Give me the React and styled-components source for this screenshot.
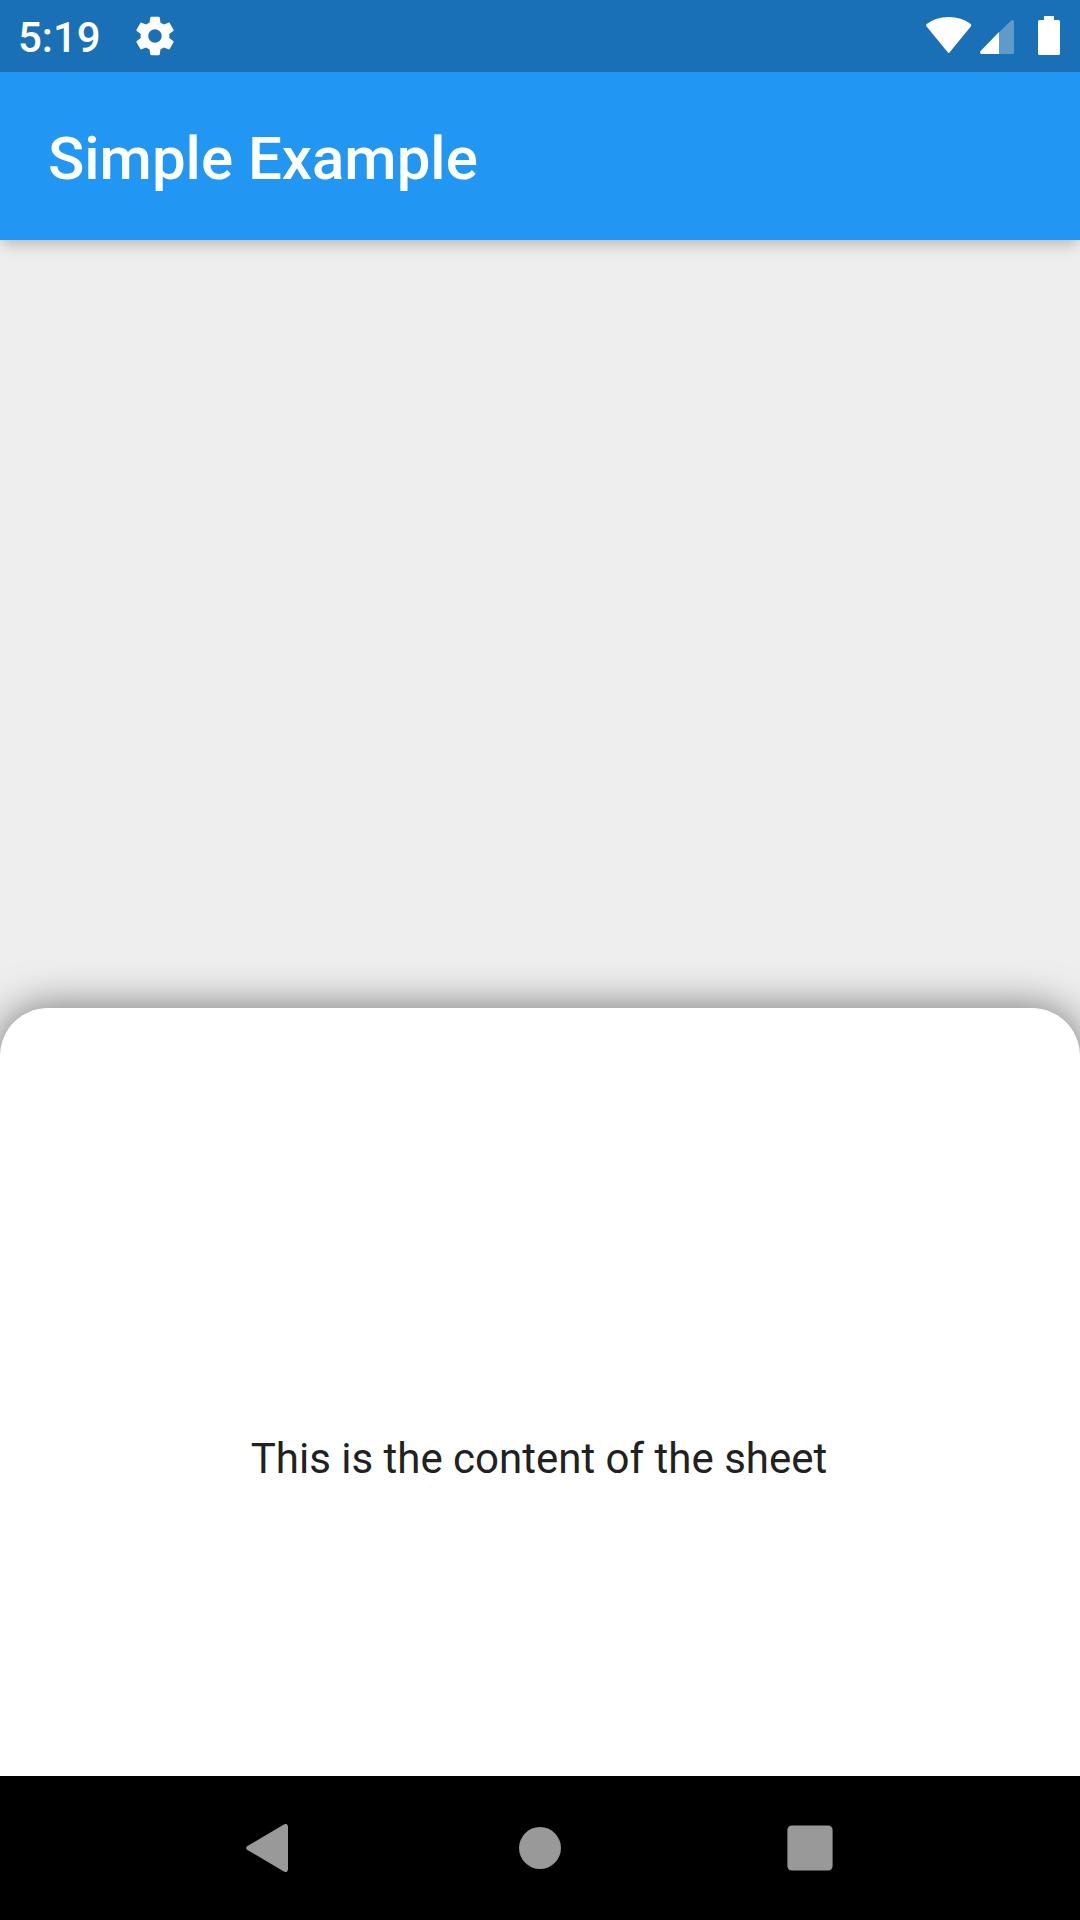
import React from 'react';
import styled, { createGlobalStyle } from 'styled-components';

const GlobalStyle = createGlobalStyle`
  * { box-sizing: border-box; }
  body { margin: 0; background: #000; }
`;

const Screen = styled.div`
  display: grid;
  grid-template-rows: 72px 168px 1536px 144px;
  width: 1080px;
  height: 1920px;
  overflow: hidden;
  font-family: Roboto, "Liberation Sans", sans-serif;
`;

const StatusBar = styled.header`
  z-index: 2;
  display: flex;
  justify-content: space-between;
  background: #1970b6;
  color: #fff;
`;

const StatusGroup = styled.div`
  display: flex;
  align-items: flex-start;
  gap: ${({ $gap = 0 }) => $gap}px;
  padding: ${({ $padding }) => $padding};
`;

const Clock = styled.span`
  width: 83px;
  font-size: 42px;
  font-weight: 500;
  line-height: 42px;
  padding-top: 2px;
`;

const Icon = styled.svg`
  display: block;
  flex: none;
  width: ${({ $w }) => $w}px;
  height: ${({ $h }) => $h}px;
  margin-top: ${({ $top = 0 }) => $top}px;
  margin-left: ${({ $left = 0 }) => $left}px;
  fill: currentColor;
`;

const AppBar = styled.div`
  z-index: 1;
  display: flex;
  align-items: center;
  padding: 6px 48px 0;
  background: #2196f3;
  box-shadow: 0 6px 12px -3px rgba(0, 0, 0, 0.16), 0 8px 15px 0 rgba(0, 0, 0, 0.05),
    0 3px 24px 0 rgba(0, 0, 0, 0.04);
`;

const Title = styled.h1`
  margin: 0;
  color: #fff;
  font-size: 60px;
  font-weight: 500;
  line-height: 70px;
`;

const Body = styled.main`
  padding-top: 768px;
  background: #eee;
  overflow: hidden;
`;

const Sheet = styled.section`
  display: flex;
  align-items: center;
  justify-content: center;
  height: 900px;
  border-radius: 48px 48px 0 0;
  background: #fff;
  box-shadow: 0 0 42px rgba(0, 0, 0, 0.54);
`;

const SheetText = styled.p`
  margin: 0 2px 0 0;
  color: #212121;
  font-size: 42px;
  line-height: 49px;
`;

const NavBar = styled.nav`
  z-index: 1;
  display: grid;
  grid-template-columns: repeat(3, 270px);
  justify-content: center;
  background: #000;
`;

const NavButton = styled.button`
  display: flex;
  align-items: center;
  justify-content: center;
  border: 0;
  padding: 0;
  background: none;
  color: #999;
`;

export default function App() {
  return (
    <Screen>
      <GlobalStyle />
      <StatusBar>
        <StatusGroup $gap={31} $padding="15px 0 0 18px">
          <Clock>5:19</Clock>
          <Icon viewBox="0 0 24 24" $w={46} $h={46} $top={-2}>
            <path d="M19.43 12.98c.04-.32.07-.64.07-.98s-.03-.66-.07-.98l2.11-1.65c.19-.15.24-.42.12-.64l-2-3.46c-.12-.22-.39-.3-.61-.22l-2.49 1c-.52-.4-1.08-.73-1.69-.98l-.38-2.65C14.46 2.18 14.25 2 14 2h-4c-.25 0-.46.18-.49.42l-.38 2.65c-.61.25-1.17.59-1.69.98l-2.49-1c-.23-.09-.49 0-.61.22l-2 3.46c-.13.22-.07.49.12.64l2.11 1.65c-.04.32-.07.65-.07.98s.03.66.07.98l-2.11 1.65c-.19.15-.24.42-.12.64l2 3.46c.12.22.39.3.61.22l2.49-1c.52.4 1.08.73 1.69.98l.38 2.65c.03.24.24.42.49.42h4c.25 0 .46-.18.49-.42l.38-2.65c.61-.25 1.17-.59 1.69-.98l2.49 1c.23.09.49 0 .61-.22l2-3.46c.12-.22.07-.49-.12-.64l-2.11-1.65zM12 15.5c-1.93 0-3.5-1.57-3.5-3.5s1.57-3.5 3.5-3.5 3.5 1.57 3.5 3.5-1.57 3.5-3.5 3.5z" />
          </Icon>
        </StatusGroup>
        <StatusGroup $padding="16px 20px 0 0">
          <Icon viewBox="0.3 0 46 37" $w={46} $h={37} $top={1}>
            <path d="M0.7 9.2Q0 8 1 7.1Q10 0 23 0Q36 0 45 7.1Q46 8 45.3 9.2L24 35.3Q23 36.6 22 35.3Z" />
          </Icon>
          <Icon viewBox="0 0 34 34" $w={34} $h={34} $top={4} $left={8}>
            <path opacity="0.3" d="M19 12.3L30.9 0.7Q31.6 0 32.4 0Q34 0 34 1.6V32.4Q34 34 32.4 34H19Z" />
            <path d="M19 12.1V34H1.4Q-0.8 33.5 0.6 31Z" />
          </Icon>
          <Icon viewBox="0 0 22 39" $w={22} $h={39} $left={24}>
            <path d="M6 0H16V4H20.5Q22 4 22 5.5V37.5Q22 39 20.5 39H1.5Q0 39 0 37.5V5.5Q0 4 1.5 4H6Z" />
          </Icon>
        </StatusGroup>
      </StatusBar>
      <AppBar>
        <Title>Simple Example</Title>
      </AppBar>
      <Body>
        <Sheet>
          <SheetText>This is the content of the sheet</SheetText>
        </Sheet>
      </Body>
      <NavBar>
        <NavButton aria-label="Back">
          <Icon viewBox="0 0 48 48" $w={48} $h={48}>
            <path d="M1.4 22.1L37.9 0.5C40.5 -0.9 42 0.7 42 3V45C42 47.3 40.5 48.9 37.9 47.5L1.4 25.9Q-1.2 24 1.4 22.1Z" />
          </Icon>
        </NavButton>
        <NavButton aria-label="Home">
          <Icon viewBox="0 0 42 42" $w={42} $h={42}>
            <circle cx="21" cy="21" r="21" />
          </Icon>
        </NavButton>
        <NavButton aria-label="Overview">
          <Icon viewBox="0 0 46 46" $w={46} $h={46}>
            <rect x="0.4" y="0.4" width="45.2" height="45.2" rx="4.5" />
          </Icon>
        </NavButton>
      </NavBar>
    </Screen>
  );
}
